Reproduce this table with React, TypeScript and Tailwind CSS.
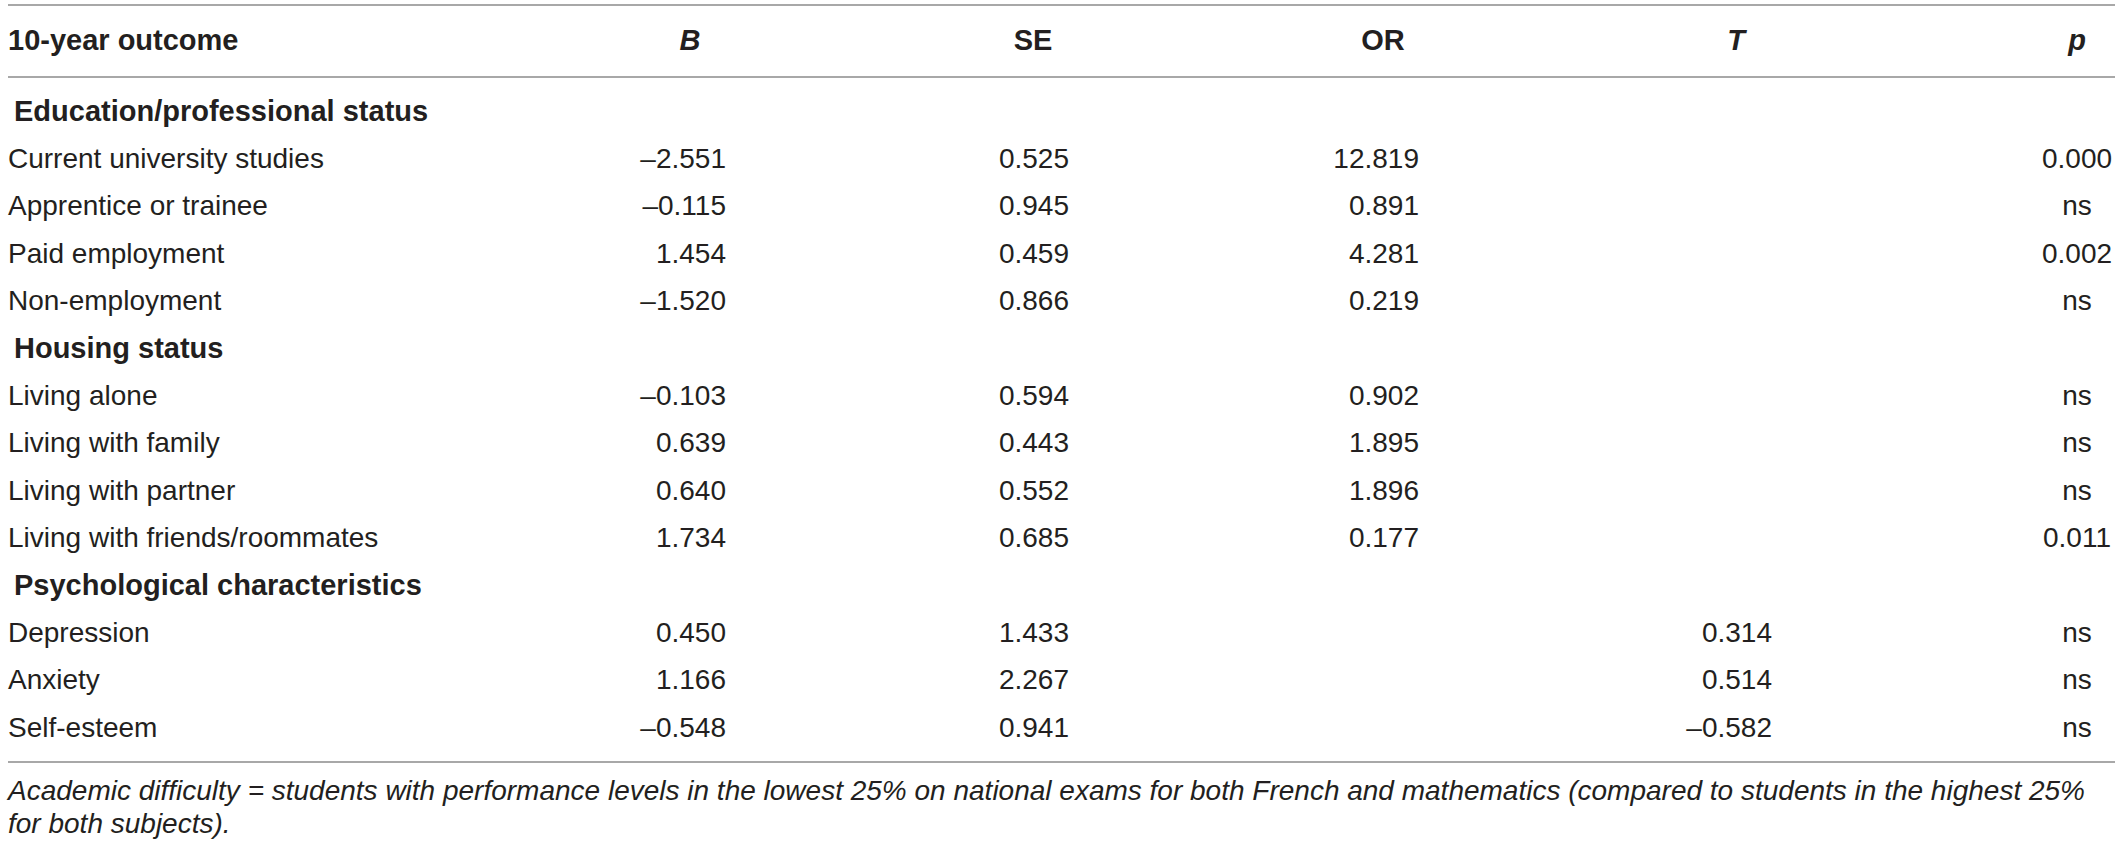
import React from 'react';

type Row =
  | { kind: 'section'; label: string }
  | { kind: 'data'; label: string; b: string; se: string; or: string; t: string; p: string };

const rows: Row[] = [
  { kind: 'section', label: 'Education/professional status' },
  { kind: 'data', label: 'Current university studies', b: '–2.551', se: '0.525', or: '12.819', t: '', p: '0.000' },
  { kind: 'data', label: 'Apprentice or trainee', b: '–0.115', se: '0.945', or: '0.891', t: '', p: 'ns' },
  { kind: 'data', label: 'Paid employment', b: '1.454', se: '0.459', or: '4.281', t: '', p: '0.002' },
  { kind: 'data', label: 'Non-employment', b: '–1.520', se: '0.866', or: '0.219', t: '', p: 'ns' },
  { kind: 'section', label: 'Housing status' },
  { kind: 'data', label: 'Living alone', b: '–0.103', se: '0.594', or: '0.902', t: '', p: 'ns' },
  { kind: 'data', label: 'Living with family', b: '0.639', se: '0.443', or: '1.895', t: '', p: 'ns' },
  { kind: 'data', label: 'Living with partner', b: '0.640', se: '0.552', or: '1.896', t: '', p: 'ns' },
  { kind: 'data', label: 'Living with friends/roommates', b: '1.734', se: '0.685', or: '0.177', t: '', p: '0.011' },
  { kind: 'section', label: 'Psychological characteristics' },
  { kind: 'data', label: 'Depression', b: '0.450', se: '1.433', or: '', t: '0.314', p: 'ns' },
  { kind: 'data', label: 'Anxiety', b: '1.166', se: '2.267', or: '', t: '0.514', p: 'ns' },
  { kind: 'data', label: 'Self-esteem', b: '–0.548', se: '0.941', or: '', t: '–0.582', p: 'ns' },
];

const cols = 'grid grid-cols-[512px_206px_343px_350px_353px_343px]';

// header label sits centred over the right-aligned numbers
const HeadCell = ({ children, italic }: { children: React.ReactNode; italic?: boolean }) => (
  <div className="flex justify-end">
    <span className={`w-[72px] text-center ${italic ? 'italic' : ''}`}>{children}</span>
  </div>
);

const NumCell = ({ value }: { value: string }) => (
  <div className="flex justify-end whitespace-nowrap">{value}</div>
);

const PCell = ({ children, italic }: { children: React.ReactNode; italic?: boolean }) => (
  <div className="flex justify-end">
    <span className={`w-[76px] text-center whitespace-nowrap ${italic ? 'italic' : ''}`}>{children}</span>
  </div>
);

export default function App() {
  return (
    <div className="w-[2120px] h-[849px] bg-white pl-[8px] pt-[4px] font-['Liberation_Sans',Arial,sans-serif] text-[#231f20] overflow-hidden">
      <div className="w-[2107px]">
        {/* Header */}
        <div className={`${cols} h-[74px] items-center border-y-2 border-[#a8a8a8] text-[29px] font-bold`}>
          <div>10-year outcome</div>
          <HeadCell italic>B</HeadCell>
          <HeadCell>SE</HeadCell>
          <HeadCell>OR</HeadCell>
          <HeadCell italic>T</HeadCell>
          <PCell italic>p</PCell>
        </div>

        {/* Body */}
        <div className="pt-[10px] pb-[10px] border-b-2 border-[#a8a8a8]">
          {rows.map((row) =>
            row.kind === 'section' ? (
              <div key={row.label} className="h-[47.4px] flex items-center pl-[6px] text-[29px] font-bold">
                {row.label}
              </div>
            ) : (
              <div key={row.label} className={`${cols} h-[47.4px] items-center text-[28px]`}>
                <div className="whitespace-nowrap">{row.label}</div>
                <NumCell value={row.b} />
                <NumCell value={row.se} />
                <NumCell value={row.or} />
                <NumCell value={row.t} />
                <PCell>{row.p}</PCell>
              </div>
            )
          )}
        </div>
      </div>

      {/* Footnote */}
      <p className="w-[2112px] pt-[11px] text-[28px] leading-[33px] italic">
        Academic difficulty = students with performance levels in the lowest 25% on national exams for both French and
        mathematics (compared to students in the highest 25% for both subjects).
      </p>
    </div>
  );
}
